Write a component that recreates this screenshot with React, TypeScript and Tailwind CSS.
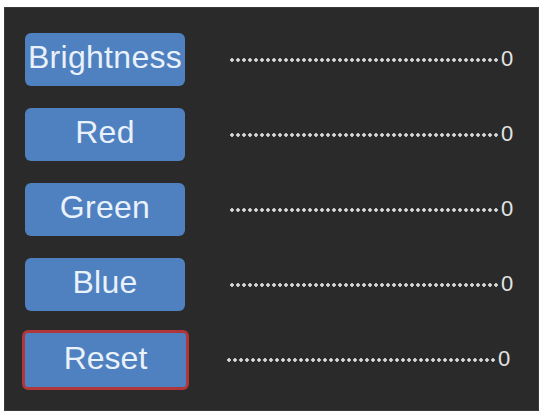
import React from "react";

type Row = { label: string; value: number; reset?: boolean };

const rows: Row[] = [
  { label: "Brightness", value: 0 },
  { label: "Red", value: 0 },
  { label: "Green", value: 0 },
  { label: "Blue", value: 0 },
  { label: "Reset", value: 0, reset: true },
];

function DotLine({ className }: { className: string }) {
  return (
    <div
      className={
        "h-[6px] bg-[radial-gradient(circle,#d6d6d6_1.5px,transparent_2.1px)] bg-[length:6px_6px] bg-repeat-x " +
        className
      }
    />
  );
}

export default function App() {
  return (
    <div className="w-[542px] h-[417px] bg-white pl-[4px] pr-[3px] pt-[7px] pb-[6px] font-['Liberation_Sans',Arial,sans-serif]">
      <div className="w-full h-full bg-[#2a2a2a] border border-[#3a3a3a] pl-[20px] pt-[25px] flex flex-col gap-[22px]">
        {rows.map((r) => (
          <div key={r.label} className="h-[53px] flex items-center">
            {r.reset ? (
              <button className="-ml-[3px] w-[167px] h-[60px] shrink-0 rounded-[6px] border-[3px] border-[#b03639] bg-[#4f80bf] text-[#e9f1fb] text-[32px] leading-none flex items-center justify-center pb-[3px]">
                {r.label}
              </button>
            ) : (
              <button className="w-[160px] h-[53px] shrink-0 rounded-[6px] bg-[#4f80bf] text-[#e9f1fb] text-[32px] tracking-[0.3px] leading-none flex items-center justify-center pb-[5px]">
                {r.label}
              </button>
            )}
            {r.reset ? (
              <DotLine className="ml-[37px] w-[270px]" />
            ) : (
              <DotLine className="ml-[44px] w-[270px]" />
            )}
            <span className="ml-[2px] -mt-[2px] text-[22px] leading-none text-[#e4e4e4]">{r.value}</span>
          </div>
        ))}
      </div>
    </div>
  );
}
